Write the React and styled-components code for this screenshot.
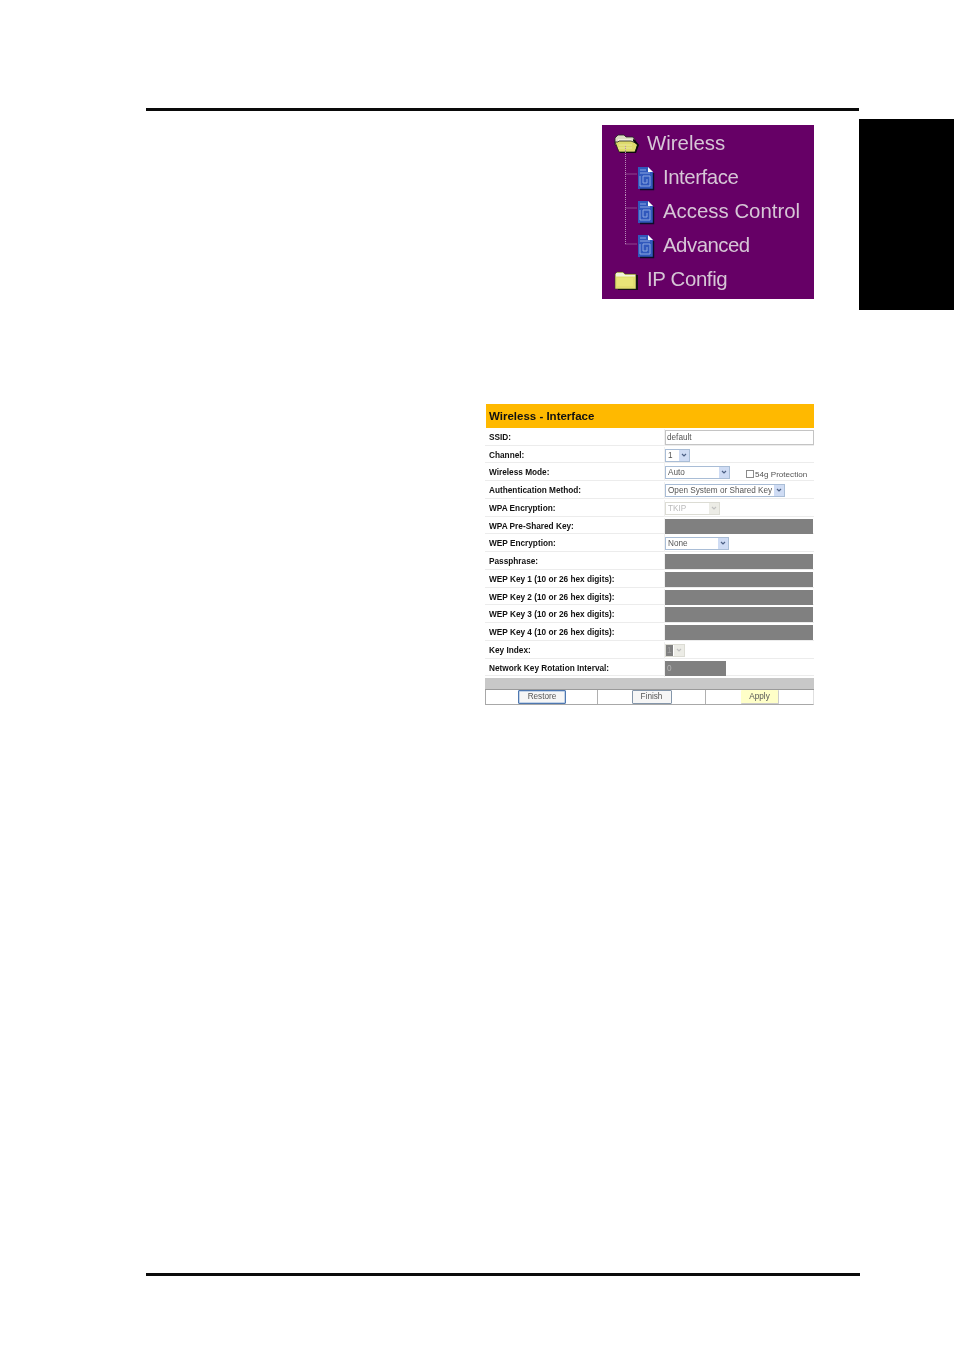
import React from "react";
import styled, { createGlobalStyle } from "styled-components";

const Global = createGlobalStyle`
  html, body { margin: 0; padding: 0; background: #fff; }
  body { font-family: "Liberation Sans", Arial, sans-serif; color: #000; }
`;

const Page = styled.div`
  width: 954px;
  height: 1351px;
  display: grid;
  grid-template-columns: 859px 95px;
  align-items: start;
  overflow: hidden;
`;
const Main = styled.main`
  box-sizing: border-box;
  padding: 108px 0 0 146px;
  display: flex;
  flex-direction: column;
  align-items: flex-end;
  height: 1276px;
`;
const Rule = styled.hr`
  border: 0;
  margin: 0;
  height: 3px;
  width: 713px;
  background: #0a0a0a;
  flex: none;
`;
const BottomRule = styled(Rule)`
  width: 714px;
  margin: auto -1px 0 0;
  align-self: flex-end;
`;
const SideTab = styled.aside`
  margin-top: 119px;
  height: 191px;
  background: #000;
`;

const Menu = styled.nav`
  margin: 14px 45px 0 0;
  width: 212px;
  height: 174px;
  background: #660066;
  flex: none;
  display: flex;
  flex-direction: column;
  justify-content: center;
  filter: blur(0.5px);
`;
const MenuRow = styled.div`
  height: 34px;
  display: flex;
  align-items: center;
  color: #d6c6d6;
  font-size: 20.4px;
  padding-left: ${p => (p.$child ? 23 : 12)}px;
`;
const MenuLabel = styled.span`
  margin-left: ${p => p.$gap}px;
  letter-spacing: ${p => p.$track || 0}px;
  padding-bottom: 2px;
  white-space: nowrap;
`;

const Panel = styled.section`
  margin: 104px 45px 0 0;
  width: 329px;
  flex: none;
  background: #fff;
  filter: blur(0.35px);
  display: flex;
  flex-direction: column;
`;
const Title = styled.h2`
  margin: 1px 0 0 1px;
  height: 24px;
  background: #ffb900;
  font-size: 11.5px;
  line-height: 24px;
  font-weight: bold;
  padding-left: 3px;
  color: #111;
`;
const FormRow = styled.div`
  height: 17.74px;
  display: grid;
  grid-template-columns: 180px 1fr;
  border-bottom: 1px solid #ececec;
  box-sizing: border-box;
  padding-top: 1px;
`;
const Label = styled.div`
  font-size: 8.25px;
  font-weight: bold;
  line-height: 17px;
  padding-left: 4px;
  color: #111;
  white-space: nowrap;
  border-right: 1px solid #f0f0f0;
`;
const Field = styled.div`
  display: flex;
  align-items: center;
  min-width: 0;
`;
const TextBox = styled.div`
  box-sizing: border-box;
  width: ${p => p.$w || 148}px;
  height: 15px;
  background: ${p => (p.$off ? "#808080" : "#fff")};
  border: 1px solid ${p => (p.$off ? "#808080" : "#c4c4c4")};
  font-size: 8.2px;
  line-height: 13px;
  padding-left: 1px;
  color: ${p => (p.$off ? "#b4b4b4" : "#555")};
`;
const SelectBox = styled.div`
  box-sizing: border-box;
  width: ${p => p.$w}px;
  height: 13px;
  border: 1px solid ${p => (p.$off ? "#dcdcd4" : "#a9bdd6")};
  display: flex;
  align-items: center;
  justify-content: space-between;
  font-size: 8.2px;
  color: ${p => (p.$off ? "#bbb" : "#555")};
  padding-left: 2px;
  background: #fff;
  white-space: nowrap;
`;
const SelectValue = styled.span`
  ${p => p.$inset && `
    background: #808080;
    color: #a0a0a0;
    width: 7px;
    height: 11px;
    margin-left: -2px;
    line-height: 11px;
    padding-left: 1px;
    box-sizing: border-box;
  `}
`;
const Arrow = styled.span`
  width: 10px;
  height: 11px;
  background: ${p => (p.$off ? "#ecece6" : "#cfdcf4")};
  display: flex;
  align-items: center;
  justify-content: center;
  flex: none;
`;
const CheckWrap = styled.label`
  display: flex;
  align-items: center;
  font-size: 8.1px;
  color: #555;
  margin-left: 16px;
  margin-top: 3px;
  white-space: nowrap;
`;
const Check = styled.span`
  width: 6px;
  height: 6px;
  border: 1px solid #8a8a8a;
  background: #fff;
  margin-right: 1px;
`;
const Divider = styled.div`
  box-sizing: border-box;
  height: 12px;
  background: #c8c8c8;
  margin-top: 1.6px;
  border-bottom: 1px solid #9a9a9a;
`;
const Buttons = styled.div`
  height: 15px;
  display: grid;
  grid-template-columns: 112px 108px 1fr;
  box-sizing: border-box;
  border: 1px solid #a8a8a8;
  border-top: 0;
  border-right-color: #e0e0e0;
`;
const BtnCell = styled.div`
  display: flex;
  justify-content: ${p => (p.$left ? "flex-start" : "center")};
  padding-left: ${p => p.$pad || 0}px;
  border-right: ${p => (p.$last ? 0 : "1px solid #b0b0b0")};
`;
const Btn = styled.button`
  box-sizing: border-box;
  width: ${p => p.$w}px;
  height: 14px;
  padding: 0;
  font-family: inherit;
  font-size: 8.2px;
  color: #555;
  background: ${p => (p.$apply ? "#ffffc8" : "#f6f6f6")};
  border: ${p => (p.$apply ? "0" : `1px solid ${p.$strong ? "#4f78b0" : "#8496aa"}`)};
  border-radius: 1px;
  ${p => p.$strong && "box-shadow: inset 0 0 0 0.5px #8fb0d8;"}
  ${p => p.$apply && "border-right: 1px solid #ccc; border-bottom: 1px solid #ccc;"}
`;

const Chevron = ({ off }) => (
  <svg width="6" height="5" viewBox="0 0 6 5">
    <path d="M1 1l2 2 2-2" fill="none" stroke={off ? "#c0c0c0" : "#4d6185"} strokeWidth="1.2" />
  </svg>
);

const Select = ({ w, value, off, inset }) => (
  <SelectBox $w={w} $off={off}>
    <SelectValue $inset={inset}>{value}</SelectValue>
    <Arrow $off={off}><Chevron off={off} /></Arrow>
  </SelectBox>
);

const FolderOpen = () => (
  <svg width="26" height="22" viewBox="0 0 26 22">
    <path d="M1 5l3-3h6l2 2h7l2 3v5H1z" fill="#dcdcc0" stroke="#222" strokeWidth="0.8" />
    <path d="M4 6h13l2 2v2H4z" fill="#f0f0dc" />
    <path d="M1 9h3l1-1h12l7 3-3 8H5z" fill="#dedb6c" stroke="#1c1c1c" strokeWidth="0.8" />
    <path d="M5 12h13M4 15h14" stroke="#ebe89c" strokeWidth="1" />
    <path d="M19 6l2 1 4 5-3 8H6v-1h15l2-7-4-4z" fill="#0c0c0c" />
  </svg>
);
const FolderClosed = () => (
  <svg width="24" height="20" viewBox="0 0 24 20">
    <path d="M1 4l2-2h6l2 2h11v15H1z" fill="#e2de70" stroke="#3a3a2a" strokeWidth="0.6" />
    <path d="M2 3h7l2 2h10v1.5H2z" fill="#f2f2dc" />
    <path d="M3 8h16v8H3z" fill="#e8e578" />
    <path d="M22 5h2v15H4v-1h18z" fill="#141414" />
  </svg>
);
const Doc = () => (
  <svg width="18" height="25" viewBox="0 0 18 25">
    <path d="M1 1h10l5 5v17H1z" fill="#3058bc" />
    <path d="M11 1l5 5h-5z" fill="#fff" />
    <path d="M3 4h6M3 7h10M3 10v10h10V10H6v7h4v-4" fill="none" stroke="#8aa6e0" strokeWidth="1" />
    <path d="M16.5 7v16.5H3" fill="none" stroke="#0d0d28" strokeWidth="1.4" />
  </svg>
);
const Connector = ({ last, first }) => (
  <svg width="12" height="34" viewBox="0 0 12 34" style={{ flex: "none", overflow: "visible" }}>
    <path
      d={`M0.5 ${first ? -15 : 0}V${last ? 15 : 34}M0.5 ${last ? 15 : 13}H12`}
      fill="none"
      stroke="#b88ab8"
      strokeWidth="1"
      strokeDasharray="1 1"
    />
  </svg>
);

const rows = [
  ["SSID:", <TextBox $w={149}>default</TextBox>],
  ["Channel:", <Select w={25} value="1" />],
  ["Wireless Mode:", <><Select w={65} value="Auto" /><CheckWrap><Check />54g Protection</CheckWrap></>],
  ["Authentication Method:", <Select w={120} value="Open System or Shared Key" />],
  ["WPA Encryption:", <Select w={55} value="TKIP" off />],
  ["WPA Pre-Shared Key:", <TextBox $off />],
  ["WEP Encryption:", <Select w={64} value="None" />],
  ["Passphrase:", <TextBox $off />],
  ["WEP Key 1 (10 or 26 hex digits):", <TextBox $off />],
  ["WEP Key 2 (10 or 26 hex digits):", <TextBox $off />],
  ["WEP Key 3 (10 or 26 hex digits):", <TextBox $off />],
  ["WEP Key 4 (10 or 26 hex digits):", <TextBox $off />],
  ["Key Index:", <Select w={20} value="1" off inset />],
  ["Network Key Rotation Interval:", <TextBox $off $w={61}>0</TextBox>],
];

export default function App() {
  return (
    <Page>
      <Global />
      <Main>
        <Rule />
        <Menu>
          <MenuRow><FolderOpen /><MenuLabel $gap={7}>Wireless</MenuLabel></MenuRow>
          <MenuRow $child><Connector first /><Doc /><MenuLabel $gap={8} $track={-0.45}>Interface</MenuLabel></MenuRow>
          <MenuRow $child><Connector /><Doc /><MenuLabel $gap={8}>Access Control</MenuLabel></MenuRow>
          <MenuRow $child><Connector last /><Doc /><MenuLabel $gap={8} $track={-0.5}>Advanced</MenuLabel></MenuRow>
          <MenuRow><FolderClosed /><MenuLabel $gap={9} $track={-0.35}>IP Config</MenuLabel></MenuRow>
        </Menu>
        <Panel>
          <Title>Wireless - Interface</Title>
          {rows.map(([label, field]) => (
            <FormRow key={label}>
              <Label>{label}</Label>
              <Field>{field}</Field>
            </FormRow>
          ))}
          <Divider />
          <Buttons>
            <BtnCell $left $pad={32}><Btn $w={48} $strong>Restore</Btn></BtnCell>
            <BtnCell><Btn $w={40}>Finish</Btn></BtnCell>
            <BtnCell $last $left $pad={35}><Btn $w={38} $apply>Apply</Btn></BtnCell>
          </Buttons>
        </Panel>
        <BottomRule />
      </Main>
      <SideTab />
    </Page>
  );
}
